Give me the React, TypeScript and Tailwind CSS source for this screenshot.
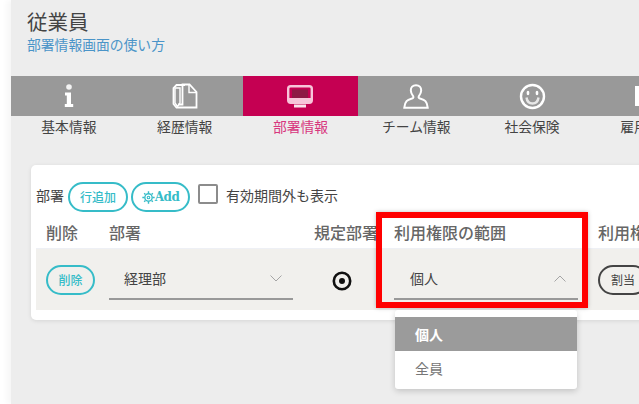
import React from "react";

const font = { fontFamily: '"Noto Sans CJK JP", sans-serif' };

function InfoIcon() {
  return (
    <svg width="10" height="24" viewBox="0 0 10 24" fill="#fff">
      <circle cx="5" cy="3" r="2.800" fill="#f3f3f3" />
      <path d="M1 8.500h6v11.500h2.200v3H.8v-3H2.800v-8.500H1z" />
    </svg>
  );
}
function DocIcon() {
  return (
    <svg width="26" height="26" viewBox="0 0 26 26" fill="none" stroke="#fff" strokeWidth="1.800">
      <path d="M13 2H4.500L1.500 5v16l3 3.500H24.500V9L17.500 1.500H10.500V21.500H6" />
      <path d="M3 5v15l2.500 3.500L8 20V5z" strokeWidth="1.400" />
      <path d="M17 2v7.500H24.500" strokeWidth="1.400" />
    </svg>
  );
}
function MonitorIcon() {
  return (
    <svg width="26" height="23" viewBox="0 0 26 23">
      <rect x="1.200" y="1.200" width="23.600" height="16.600" rx="2.500" fill="none" stroke="#f7c6da" strokeWidth="2.400" />
      <rect x="5" y="4.500" width="16" height="8.500" fill="#8c1a45" />
      <rect x="2" y="13" width="22" height="4" fill="#f7c6da" />
      <rect x="7" y="19.500" width="12" height="3" fill="#fbe3ec" />
    </svg>
  );
}
function UserIcon() {
  return (
    <svg width="26" height="25" viewBox="0 0 26 25" fill="none" stroke="#fff" strokeWidth="2">
      <path d="M13 1.200c3.400 0 5.200 2.300 5.200 5 0 2.800-1.500 4.700-2.400 6.100-.7 1.200.2 2 1.900 2.400 3.800 1 6.500 2.500 7 9H1.300c.5-6.500 3.200-8 7-9 1.700-.4 2.600-1.200 1.900-2.400-.9-1.400-2.400-3.300-2.400-6.100 0-2.700 1.800-5 5.200-5z" />
    </svg>
  );
}
function SmileIcon() {
  return (
    <svg width="27" height="27" viewBox="0 0 27 27" fill="none" stroke="#fff">
      <circle cx="13.500" cy="13.500" r="11.500" strokeWidth="2.400" />
      <ellipse cx="9" cy="10" rx="1.400" ry="2.200" fill="#fff" stroke="none" />
      <ellipse cx="18" cy="10" rx="1.400" ry="2.200" fill="#fff" stroke="none" />
      <path d="M7.500 14.500c.5 4 3 6 6 6s5.500-2 6-6" strokeWidth="2.400" stroke="#e8e8e8" />
    </svg>
  );
}
function Chevron({ up = false }: { up?: boolean }) {
  return (
    <svg width="12" height="7" viewBox="0 0 12 7" fill="none" stroke="#a5a5a5" strokeWidth="1">
      <path d={up ? "M.5 6.500 6 1l5.500 5.500" : "M.5.500 6 6 11.500.500"} />
    </svg>
  );
}
function Radio() {
  return (
    <svg width="20" height="20" viewBox="0 0 20 20">
      <circle cx="10" cy="10" r="8.200" fill="none" stroke="#111" strokeWidth="2.600" />
      <circle cx="10" cy="10" r="3" fill="#111" />
    </svg>
  );
}
function Gear() {
  return (
    <svg width="13" height="13" viewBox="0 0 12 12" fill="none" stroke="#36bcc8">
      <circle cx="6" cy="6" r="3.400" strokeWidth="1.300" />
      <circle cx="6" cy="6" r="1.200" strokeWidth="1" />
      <path d="M6 .3v1.800M6 9.900v1.800M.3 6h1.800M9.900 6h1.800M2 2l1.200 1.200M8.800 8.800 10 10M10 2 8.800 3.200M3.200 8.800 2 10" strokeWidth="1.300" />
    </svg>
  );
}

const tabs = [
  { label: "基本情報", icon: <InfoIcon /> },
  { label: "経歴情報", icon: <DocIcon /> },
  { label: "部署情報", icon: <MonitorIcon />, active: true },
  { label: "チーム情報", icon: <UserIcon /> },
  { label: "社会保険", icon: <SmileIcon /> },
  { label: "雇用情報", icon: <div className="w-[26px] h-[20px] bg-white" /> },
];

export default function App() {
  return (
    <div className="w-[639px] h-[404px] overflow-hidden bg-white relative" style={font}>
      <div className="ml-[11px] h-[404px] w-[628px] bg-[#ededed] shadow-[-4px_0_6px_rgba(0,0,0,0.04)]">
        <div className="h-[76px] pl-[16px] pt-[7px]">
          <div className="text-[20.500px] leading-[28px] text-[#444]">従業員</div>
          <div className="text-[13.800px] leading-[19px] text-[#4a94c8]">部署情報画面の使い方</div>
        </div>

        <div className="flex w-[700px]">
          {tabs.map((t) => (
            <div key={t.label} className="w-[115.800px] shrink-0 flex flex-col items-center">
              <div className={`w-full h-[40px] flex items-center justify-center ${t.active ? "bg-[#c50052]" : "bg-[#999999]"}`}>
                {t.icon}
              </div>
              <div className={`text-[13.800px] leading-[20px] whitespace-nowrap ${t.active ? "text-[#d8367e]" : "text-[#444]"}`}>{t.label}</div>
            </div>
          ))}
        </div>

        <div className="mt-[29px] ml-[20px] w-[640px] h-[155px] bg-white rounded-[5px] shadow-[0_1px_4px_rgba(0,0,0,0.1)] px-[5px] pt-[15px]">
          <div className="flex items-center h-[34px] text-[14px] text-[#444]">
            <span className="mr-[4px] -translate-y-[2px]">部署</span>
            <button className="w-[60px] h-[30px] rounded-full border-2 border-[#36bcc8] text-[#36bcc8] text-[12px] font-medium mr-[3px]">行追加</button>
            <button className="w-[59px] h-[30px] rounded-full border-2 border-[#36bcc8] text-[#36bcc8] flex items-center justify-center mr-[8px]">
              <Gear />
              <span style={{ fontFamily: '"DejaVu Serif", serif' }} className="text-[12px] font-bold tracking-[-0.5px]">Add</span>
            </button>
            <span className="w-[20px] h-[20px] border-2 border-[#8c8c8c] rounded-[2px] mr-[8px] -translate-y-[3px]" />
            <span className="-translate-y-[2px]">有効期間外も表示</span>
          </div>

          <div className="grid grid-cols-[73px_205px_80px_204px_100px] h-[34px] pt-[2px] items-center text-[16px] text-[#666] font-medium">
            <div className="pl-[10px]">削除</div>
            <div>部署</div>
            <div className="whitespace-nowrap">規定部署</div>
            <div>利用権限の範囲</div>
            <div className="whitespace-nowrap">利用権限</div>
          </div>

          <div className="grid grid-cols-[73px_205px_80px_204px_100px] h-[62px] items-center bg-[#f1f0ed] border-t border-[#eef0f5] text-[14px] text-[#444]">
            <div className="pl-[10px]">
              <button className="w-[49px] h-[30px] rounded-full border-2 border-[#36bcc8] text-[#36bcc8] text-[12px] font-medium">削除</button>
            </div>
            <div className="w-[184px] h-[41px] border-b-2 border-[#999] flex items-center justify-between pl-[15px] pr-[11px]">
              <span>経理部</span>
              <Chevron />
            </div>
            <div className="pl-[18px] mt-[3px]"><Radio /></div>
            <div className="w-[184px] h-[41px] border-b-2 border-[#999] flex items-center justify-between pl-[16px] pr-[12px]">
              <span>個人</span>
              <Chevron up />
            </div>
            <div>
              <button className="w-[50px] h-[30px] rounded-full border-2 border-[#444] text-[#444] text-[12px]">割当</button>
            </div>
          </div>
        </div>
      </div>

      <div className="absolute left-[376px] top-[212px] w-[212px] h-[96px] border-[6px] border-[#ff0000] shadow-[0_0_4px_rgba(0,0,0,0.25)]" />

      <div className="absolute left-[395px] top-[310px] w-[182px] h-[79px] bg-white rounded-[3px] shadow-[0_2px_6px_rgba(0,0,0,0.18)] py-[7px] text-[14px]">
        <div className="h-[34px] bg-[#9b9b9b] text-white font-bold pl-[20px] flex items-center">個人</div>
        <div className="h-[34px] text-[#777] pl-[20px] flex items-center">全員</div>
      </div>
    </div>
  );
}
